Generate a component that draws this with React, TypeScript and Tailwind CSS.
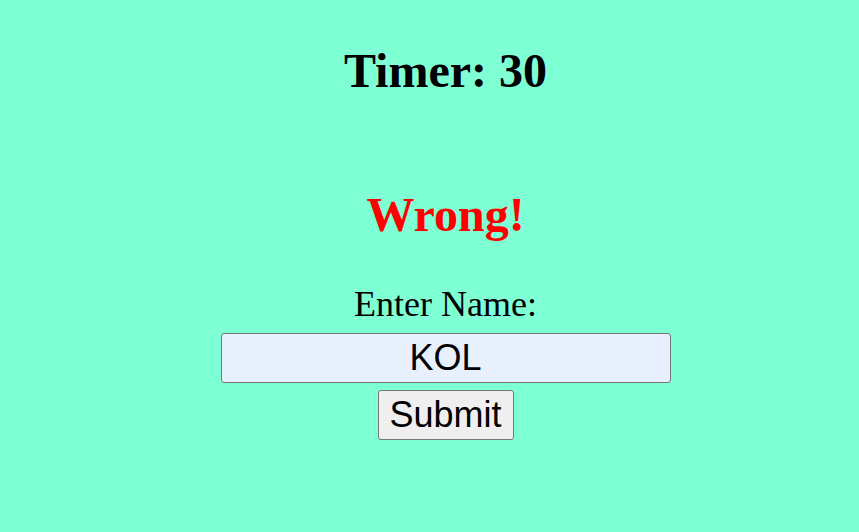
import React, { useState } from 'react';

const App: React.FC = () => {
  const [name, setName] = useState('KOL');

  return (
    <div className="min-h-[532px] w-full bg-[#7fffd4] flex flex-col items-center pt-[44px] pl-[32px] font-['Liberation_Serif',serif] text-black">
      <h1 className="text-[48px] font-bold leading-[53px]">Timer: 30</h1>

      <h2 className="mt-[91px] text-[48px] font-bold leading-[53px] text-[#ff0000]">Wrong!</h2>

      <label htmlFor="name" className="mt-[43px] text-[36px] leading-[40px]">
        Enter Name:
      </label>
      <input
        id="name"
        type="text"
        value={name}
        onChange={(e) => setName(e.target.value)}
        className="mt-[9px] w-[450px] h-[50px] bg-[#e8f0fe] border border-[#767676] rounded-[3px] text-center text-[36px] font-['Liberation_Sans',sans-serif] outline-none"
      />
      <button
        type="button"
        className="mt-[7px] w-[136px] h-[50px] bg-[#efefef] border border-[#767676] rounded-[3px] text-[36px] leading-none font-['Liberation_Sans',sans-serif]"
      >
        Submit
      </button>
    </div>
  );
};

export default App;
